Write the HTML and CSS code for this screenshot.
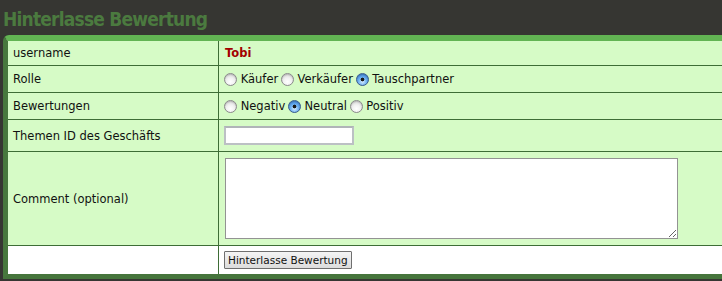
FILE: index.html
```html
<!DOCTYPE html>
<html lang="de">
<head>
    <meta charset="UTF-8">
    <title>Hinterlasse Bewertung</title>
    <link rel="stylesheet" href="styles.css">
</head>
<body>
    <h1 class="title">Hinterlasse Bewertung</h1>
    <div class="box">
        <form id="ratingForm">
            <table class="rating">
                <tr class="row-user">
                    <td class="label">username</td>
                    <td class="value"><span class="user">Tobi</span></td>
                </tr>
                <tr class="row-radio">
                    <td class="label">Rolle</td>
                    <td class="value">
                        <label><input type="radio" name="role" value="buyer"> Käufer</label>
                        <label><input type="radio" name="role" value="seller"> Verkäufer</label>
                        <label><input type="radio" name="role" value="trade" checked> Tauschpartner</label>
                    </td>
                </tr>
                <tr class="row-radio">
                    <td class="label">Bewertungen</td>
                    <td class="value">
                        <label><input type="radio" name="rating" value="neg"> Negativ</label>
                        <label><input type="radio" name="rating" value="neutral" checked> Neutral</label>
                        <label><input type="radio" name="rating" value="pos"> Positiv</label>
                    </td>
                </tr>
                <tr class="row-topic">
                    <td class="label">Themen ID des Geschäfts</td>
                    <td class="value"><input type="text" name="topic" class="topic"></td>
                </tr>
                <tr class="row-comment">
                    <td class="label">Comment (optional)</td>
                    <td class="value"><textarea name="comment" class="comment"></textarea></td>
                </tr>
                <tr class="row-submit">
                    <td class="label"></td>
                    <td class="value"><button type="submit" class="submit">Hinterlasse Bewertung</button></td>
                </tr>
            </table>
        </form>
    </div>
</body>
</html>
```

FILE: styles.css
```css
body {
    margin: 0;
    padding: 0 0 0 3px;
    background: #363632;
    font-family: "DejaVu Sans", Verdana, sans-serif;
    font-size: 11.5px;
    color: #111;
    overflow: hidden;
}

.title {
    margin: 0;
    height: 35px;
    line-height: 38px;
    font-family: "DejaVu Sans Condensed", "DejaVu Sans", sans-serif;
    font-size: 19px;
    font-weight: bold;
    letter-spacing: -0.8px;
    color: #4b7a3f;
    white-space: nowrap;
}

.box {
    border-top: 6px solid #62b453;
    border-left: 5px solid #47783d;
    border-bottom: 5px solid #46753c;
    border-top-left-radius: 6px;
    background: #d6fbc6;
    width: 714px;
}

.rating {
    border-collapse: collapse;
    width: 100%;
}

.rating td {
    border-bottom: 1px solid #3e6d36;
    padding: 0;
    vertical-align: middle;
}

.rating .label {
    width: 205px;
    padding-left: 5px;
    border-right: 1px solid #3e6d36;
}

.rating .value {
    padding-left: 6px;
}

.row-user td { height: 24px; }
.row-radio td { height: 26px; }
.row-topic td { height: 31px; }
.row-comment td { height: 93px; }

.row-submit td {
    height: 28px;
    border-bottom: none;
    background: #fff;
}

.user {
    color: #a30000;
    font-weight: bold;
}

input[type="radio"] {
    -webkit-appearance: none;
    appearance: none;
    width: 13px;
    height: 13px;
    margin: 0 0 0 -1px;
    vertical-align: -3px;
    border-radius: 50%;
    border: 1px solid #8a8a8a;
    background: radial-gradient(circle at 50% 70%, #fff 0, #f2f2f2 40%, #c9c9c9 100%);
    box-shadow: inset 0 1px 1px rgba(0, 0, 0, 0.15);
}

input[type="radio"]:checked {
    border-color: #3d5f8c;
    background:
        radial-gradient(circle, #1a1a1a 0, #1a1a1a 1.6px, transparent 2.2px),
        radial-gradient(circle at 50% 70%, #d8ecff 0, #6aaef0 45%, #2f73c9 100%);
}

.topic {
    width: 124px;
    height: 15px;
    padding: 0 1px;
    margin: 0 0 0 -1px;
    border: 2px solid #bcc0c4;
    border-top-color: #b0b4b8;
    background: #fff;
    vertical-align: middle;
}

.comment {
    display: block;
    width: 447px;
    height: 75px;
    margin: 0;
    padding: 2px;
    border: 1px solid #939393;
    background: #fff;
    resize: both;
}

.submit {
    margin: 0 0 0 -1px;
    height: 18px;
    padding: 0 3px;
    font-family: "DejaVu Sans", Verdana, sans-serif;
    font-size: 10.5px;
    color: #111;
    border: 1px solid #6f6f6f;
    border-radius: 1px;
    background: linear-gradient(#f4f4f4, #dcdcdc);
}
```
